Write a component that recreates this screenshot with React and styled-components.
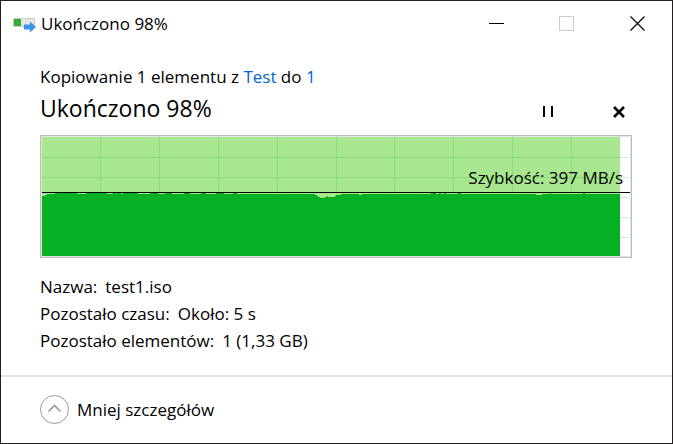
import styled, { createGlobalStyle } from 'styled-components';

const GlobalStyle = createGlobalStyle`
  *, *::before, *::after {
    box-sizing: border-box;
  }
  body {
    margin: 0;
    font-family: "Open Sans", "Noto Sans", sans-serif;
    font-size: 17px;
    line-height: 27px;
    color: #000;
  }
`;

const Dialog = styled.main`
  display: flex;
  flex-direction: column;
  min-height: 100vh;
  background: #fff;
  border: 1px solid #231f20;
`;

const TitleBar = styled.header`
  display: flex;
  align-items: center;
  justify-content: space-between;
  height: 44px;
  padding-left: 12px;
`;

const Title = styled.h1`
  display: flex;
  align-items: center;
  gap: 4px;
  margin: 0;
  font-size: 17px;
  font-weight: 400;
`;

const WindowControls = styled.div`
  display: flex;
`;

const IconButton = styled.button`
  display: flex;
  align-items: center;
  justify-content: center;
  width: ${props => props.$width};
  height: ${props => props.$height};
  padding: 0;
  border: 0;
  background: none;
  cursor: pointer;
  &:disabled {
    cursor: default;
  }
`;

const Content = styled.section`
  flex: 1;
  padding: 18px 40px 20px 39px;
`;

const Summary = styled.p`
  margin: 0;
`;

const Link = styled.a`
  color: #0066cc;
  text-decoration: none;
`;

const StatusRow = styled.div`
  display: flex;
  align-items: center;
  justify-content: space-between;
  height: 36px;
  margin-bottom: 9px;
`;

const Status = styled.h2`
  margin: 0;
  font-size: 23px;
  font-weight: 400;
`;

const Actions = styled.div`
  display: flex;
  align-self: flex-end;
  gap: 44px;
`;

const ChartFrame = styled.div`
  position: relative;
  padding: 1px;
  border: 1px solid #bcbcbc;
  background: #e3e3e3;
`;

const ChartSvg = styled.svg`
  display: block;
  width: 100%;
  height: 119px;
  background: #fff;
`;

const Speed = styled.span`
  position: absolute;
  top: 28px;
  right: 8px;
`;

const Details = styled.dl`
  margin: 15px 0 0;
`;

const DetailRow = styled.div`
  display: flex;
  gap: 8px;
  dt, dd {
    margin: 0;
  }
`;

const Footer = styled.footer`
  padding: 18px 39px 19px;
  border-top: 2px solid #e1e1e1;
`;

const Toggle = styled.button`
  display: flex;
  align-items: center;
  gap: 8px;
  padding: 0;
  border: 0;
  background: none;
  color: inherit;
  font: inherit;
  cursor: pointer;
`;

const details = [
  ['Nazwa:', 'test1.iso'],
  ['Pozostało czasu:', 'Około: 5 s'],
  ['Pozostało elementów:', '1 (1,33 GB)'],
];

const gridColumns = [58, 117, 176, 235, 294, 352, 411, 470, 529];
const gridRows = [20, 40, 60, 80, 100];

// [x, top] - the transfer speed keeps each level until the next x
const samples = [
  [0, 59], [3, 58], [5, 57], [13, 56], [35, 57], [44, 56], [65, 57], [71, 56],
  [74, 57], [75, 56], [79, 57], [81, 56], [96, 57], [108, 56], [116, 57],
  [123, 56], [130, 57], [142, 56], [148, 57], [159, 56], [164, 57], [174, 56],
  [182, 57], [191, 56], [195, 57], [273, 58], [275, 59], [276, 60], [278, 61],
  [283, 60], [285, 59], [286, 60], [293, 59], [294, 58], [299, 57], [317, 58],
  [320, 57], [389, 56], [394, 57], [397, 56], [399, 57], [402, 56], [404, 57],
  [416, 56], [419, 57], [494, 58], [500, 57], [508, 56], [509, 57], [541, 56],
  [543, 57],
];

const speedPath = `M0 119${samples.map(([x, y]) => `H${x}V${y}`).join('')}H578V119Z`;

const CopyIcon = () => (
  <svg width="24" height="20" viewBox="0 0 24 20" aria-hidden="true">
    <rect x="0.5" y="5.5" width="21" height="8" fill="#e6e6e6" stroke="#cdcdcd" />
    <rect x="1" y="6" width="7" height="7" fill="#30b030" />
    <path d="M11 11.5h6v-3l6 5.5-6 5.5v-3h-6z" fill="#3a96e4" />
  </svg>
);

const SpeedChart = () => (
  <ChartSvg viewBox="0 0 588 119" preserveAspectRatio="none" shapeRendering="crispEdges" role="img" aria-label="Szybkość kopiowania">
    {gridRows.map(y => <rect key={y} y={y} width="587" height="1" fill="#c9efd0" />)}
    <rect width="578" height="119" fill="#a8e690" />
    {gridRows.map(y => <rect key={y} y={y} width="578" height="1" fill="#8ade78" />)}
    {gridColumns.map(x => <rect key={x} x={x} width="1" height="119" fill="#8ade78" />)}
    <path d={speedPath} fill="#06b025" />
    <rect y="55" width="588" height="1" fill="#000" />
  </ChartSvg>
);

export default function App() {
  return (
    <>
      <GlobalStyle />
      <Dialog>
        <TitleBar>
          <Title>
            <CopyIcon />
            Ukończono 98%
          </Title>
          <WindowControls>
            <IconButton $width="71px" $height="43px" aria-label="Minimalizuj">
              <svg width="15" height="15" shapeRendering="crispEdges">
                <path d="M0 7.5h15" stroke="#000" />
              </svg>
            </IconButton>
            <IconButton $width="69px" $height="43px" aria-label="Maksymalizuj" disabled>
              <svg width="15" height="15">
                <rect x="0.5" y="0.5" width="14" height="14" fill="none" stroke="#ccc" />
              </svg>
            </IconButton>
            <IconButton $width="71px" $height="43px" aria-label="Zamknij">
              <svg width="17" height="15">
                <path d="M2.5 0.5l14 14M16.5 0.5l-14 14" stroke="#000" strokeWidth="1.2" />
              </svg>
            </IconButton>
          </WindowControls>
        </TitleBar>

        <Content>
          <Summary>
            Kopiowanie 1 elementu z <Link href="#test">Test</Link> do <Link href="#1">1</Link>
          </Summary>
          <StatusRow>
            <Status>Ukończono 98%</Status>
            <Actions>
              <IconButton $width="28px" $height="29px" aria-label="Wstrzymaj">
                <svg width="10" height="11">
                  <path d="M0 0h2v11H0zM8 0h2v11H8z" />
                </svg>
              </IconButton>
              <IconButton $width="26px" $height="29px" aria-label="Anuluj">
                <svg width="12" height="12">
                  <path d="M1 1l10 10M11 1L1 11" stroke="#000" strokeWidth="2.6" />
                </svg>
              </IconButton>
            </Actions>
          </StatusRow>
          <ChartFrame>
            <SpeedChart />
            <Speed>Szybkość: 397 MB/s</Speed>
          </ChartFrame>
          <Details>
            {details.map(([label, value]) => (
              <DetailRow key={label}>
                <dt>{label}</dt>
                <dd>{value}</dd>
              </DetailRow>
            ))}
          </Details>
        </Content>

        <Footer>
          <Toggle aria-expanded="true">
            <svg width="29" height="29" fill="none" aria-hidden="true">
              <circle cx="14.5" cy="14.5" r="14" stroke="#999" />
              <path d="M8.5 16.5l6-6 6 6" stroke="#999" strokeWidth="1.6" />
            </svg>
            Mniej szczegółów
          </Toggle>
        </Footer>
      </Dialog>
    </>
  );
}
